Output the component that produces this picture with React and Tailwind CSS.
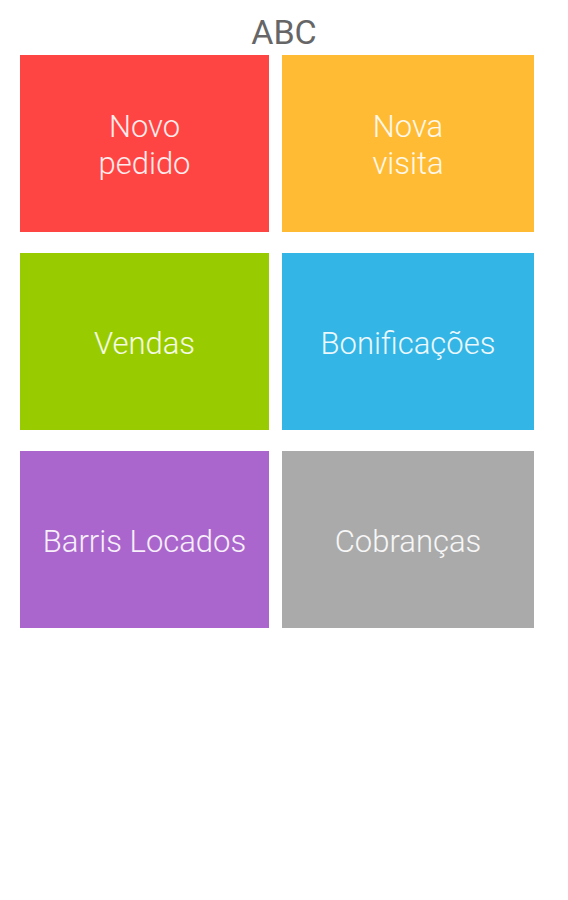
const tiles = [
  { label: ["Novo", "pedido"], color: "bg-[#ff4444]" },
  { label: ["Nova", "visita"], color: "bg-[#ffbb33]" },
  { label: ["Vendas"], color: "bg-[#99cc00]" },
  { label: ["Bonificações"], color: "bg-[#33b5e5]" },
  { label: ["Barris Locados"], color: "bg-[#aa66cc]" },
  { label: ["Cobranças"], color: "bg-[#aaaaaa]" },
];

export default function App() {
  return (
    <div className="w-[568px] h-[900px] bg-white font-['Roboto',sans-serif]">
      <h1 className="pt-[11px] text-center text-[34px] leading-[42px] font-normal text-[#666666]">ABC</h1>
      <div className="ml-[20px] mt-[2px] grid grid-cols-[249px_252px] gap-x-[13px] gap-y-[21px]">
        {tiles.map((t, i) => (
          <div
            key={i}
            className={`${t.color} h-[177px] pt-[3px] flex flex-col items-center justify-center text-white/90 text-[31px] leading-[37px] font-light`}
          >
            {t.label.map((l) => (
              <span key={l}>{l}</span>
            ))}
          </div>
        ))}
      </div>
    </div>
  );
}
